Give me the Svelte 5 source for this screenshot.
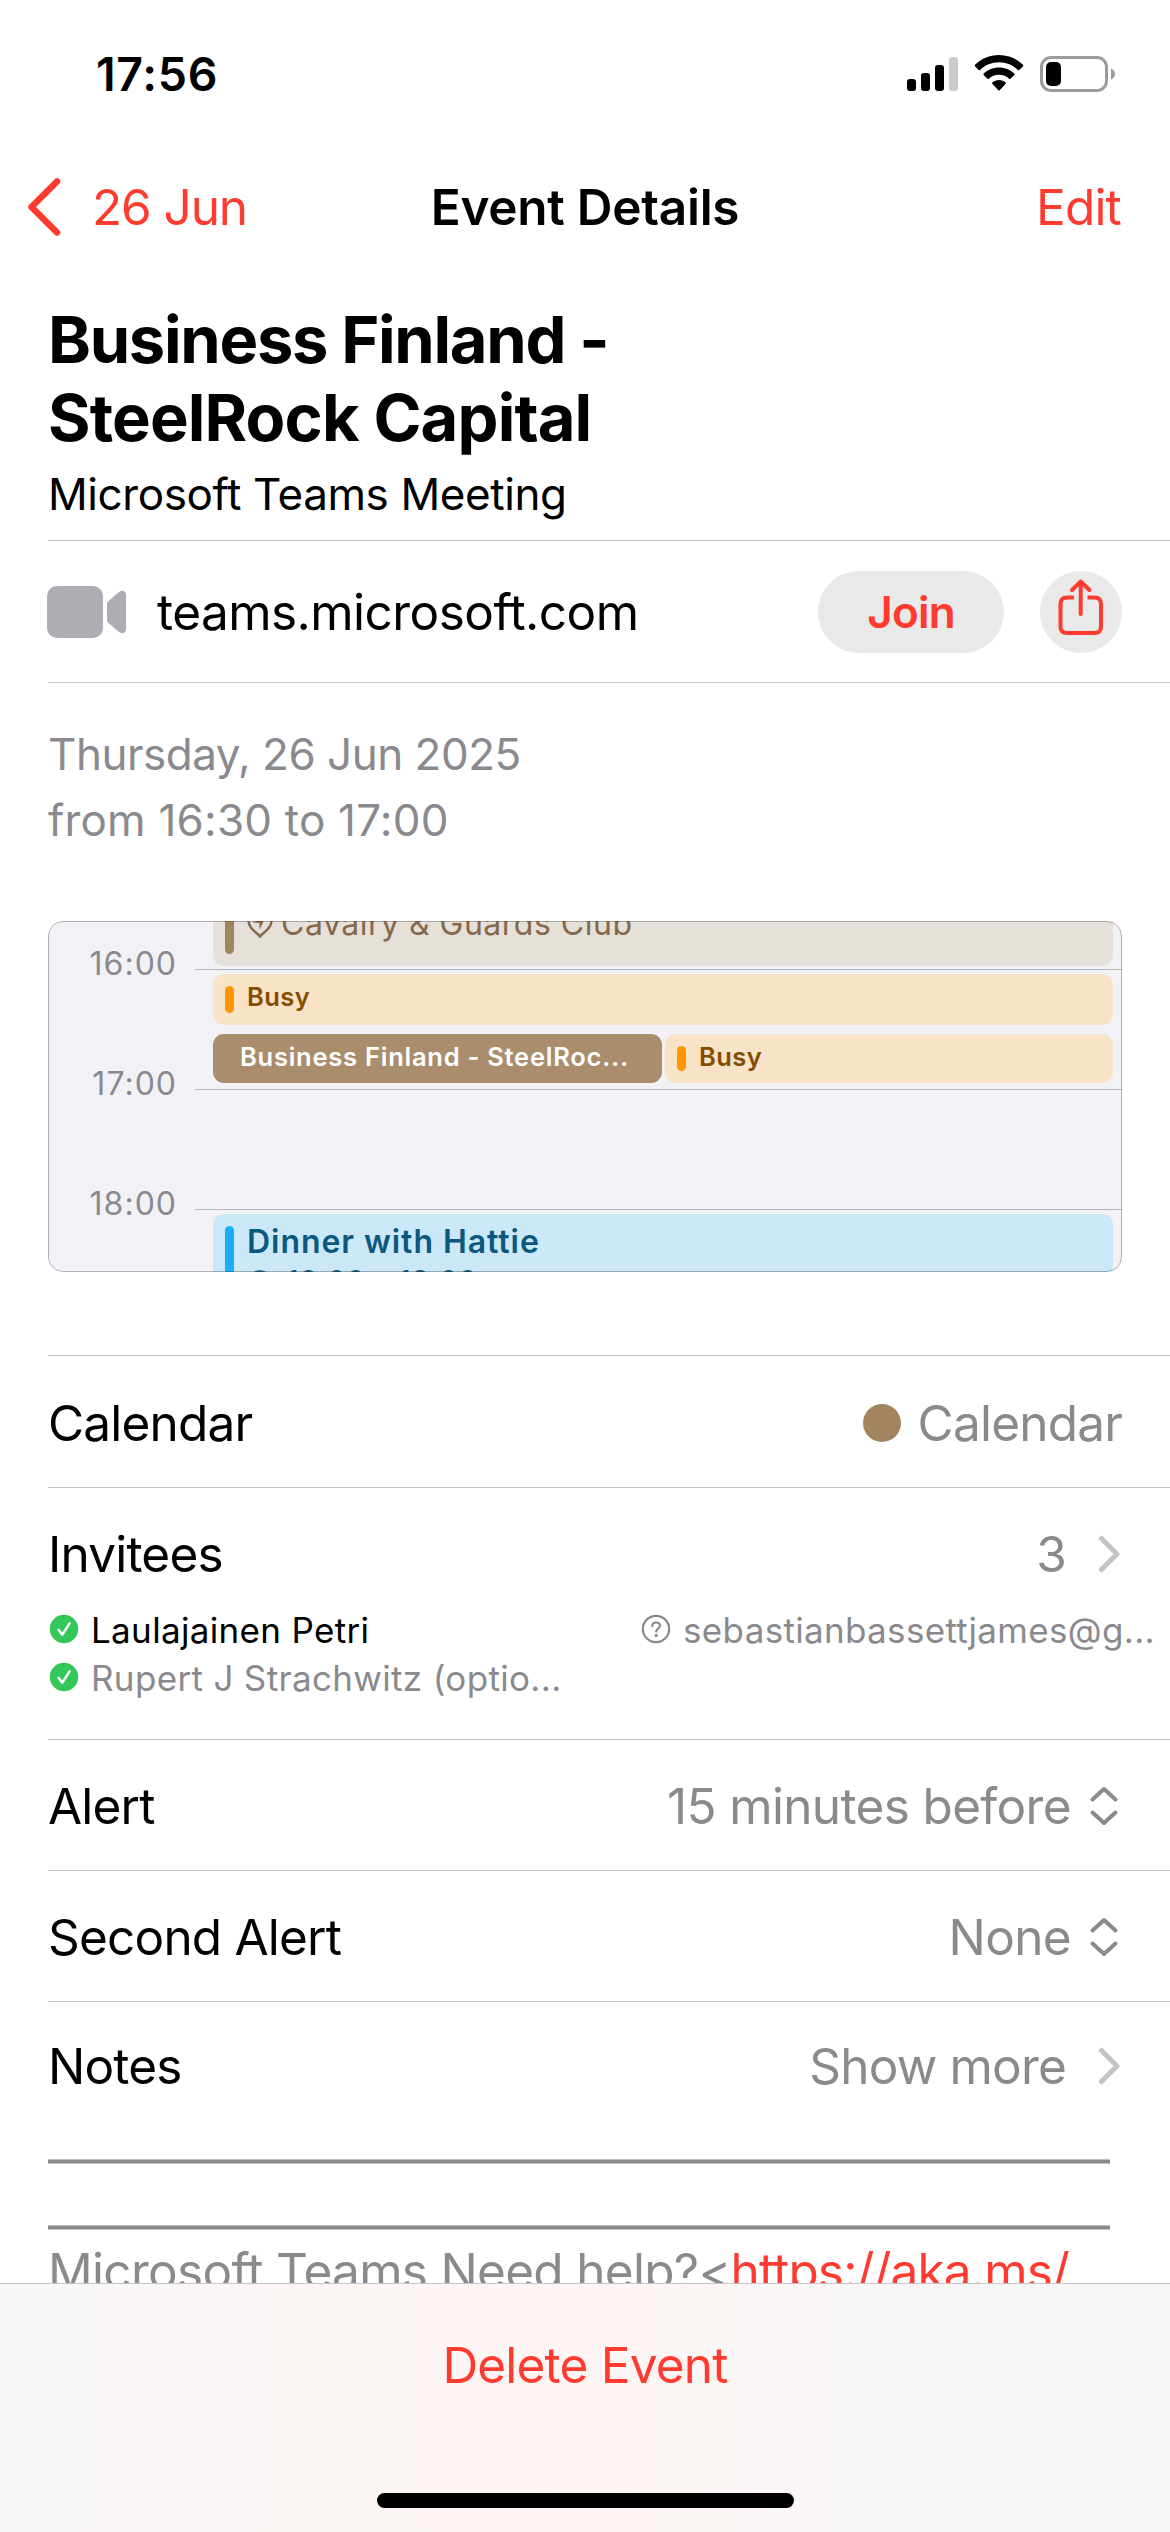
<script>
	const hours = [
		{ label: '16:00', top: 47 },
		{ label: '17:00', top: 167 },
		{ label: '18:00', top: 287 }
	];

	const alerts = [
		{ label: 'Alert', value: '15 minutes before' },
		{ label: 'Second Alert', value: 'None' }
	];
</script>

{#snippet chevron()}
	<svg class="chevron" width="24" height="40" viewBox="0 0 24 40" fill="none">
		<path d="M3.5 4.5 L19 20 L3.5 35.5" stroke="#c4c4c7" stroke-width="5" stroke-linecap="round" stroke-linejoin="round" />
	</svg>
{/snippet}

{#snippet accepted()}
	<svg width="30" height="30" viewBox="0 0 30 30" fill="none">
		<circle cx="15" cy="15" r="14.3" fill="#34c759" />
		<path d="M9.5 15.8 L13.3 20.6 L20.6 9.4" stroke="#fff" stroke-width="2.5" stroke-linecap="round" stroke-linejoin="round" />
	</svg>
{/snippet}

<div class="screen">
	<div class="status">
		<span class="time">17:56</span>
		<div class="indicators">
			<svg width="52" height="36" viewBox="0 0 52 36">
				<rect x="1" y="23" width="9" height="12" rx="3" />
				<rect x="15" y="17" width="9" height="18" rx="3" />
				<rect x="29" y="9" width="9" height="26" rx="3" />
				<rect x="43" y="1" width="9" height="34" rx="3" fill="#cbcbcb" />
			</svg>
			<svg class="wifi" width="50" height="38" viewBox="0 0 50 38">
				<path d="M25 1 C34.5 1 43 4.8 49 10.8 C49.4 11.2 49.4 11.8 49 12.2 L45.3 16 C44.9 16.4 44.3 16.4 43.9 16 C38.9 11.1 32.3 8.3 25 8.3 C17.7 8.3 11.1 11.1 6.1 16 C5.7 16.4 5.1 16.4 4.7 16 L1 12.2 C0.6 11.8 0.6 11.2 1 10.8 C7 4.8 15.5 1 25 1 Z" />
				<path d="M25 13.5 C31 13.5 36.3 15.8 40.3 19.6 C40.7 20 40.7 20.6 40.3 21 L36.5 24.8 C36.1 25.2 35.5 25.2 35.1 24.8 C32.4 22.3 28.9 20.8 25 20.8 C21.1 20.8 17.6 22.3 14.9 24.8 C14.5 25.2 13.9 25.2 13.5 24.8 L9.7 21 C9.3 20.6 9.3 20 9.7 19.6 C13.7 15.8 19 13.5 25 13.5 Z" />
				<path d="M25 26 C27.6 26 29.9 26.9 31.7 28.4 C32.1 28.8 32.1 29.3 31.7 29.7 L25.7 36.2 C25.3 36.6 24.7 36.6 24.3 36.2 L18.3 29.7 C17.9 29.3 17.9 28.8 18.3 28.4 C20.1 26.9 22.4 26 25 26 Z" />
			</svg>
			<svg width="76" height="38" viewBox="0 0 76 38">
				<rect x="1.5" y="2.5" width="65" height="33" rx="9.5" fill="none" stroke="#9b9b9b" stroke-width="3" />
				<rect x="6" y="7" width="15" height="24" rx="5" />
				<path d="M71 13.5 C73.5 14.5 75 16.5 75 19 C75 21.5 73.5 23.5 71 24.5 Z" fill="#9b9b9b" />
			</svg>
		</div>
	</div>

	<nav>
		<button class="back">
			<svg width="36" height="62" viewBox="0 0 36 62" fill="none">
				<path d="M31 5.5 L5.5 31 L31 56.5" stroke="#ff3b30" stroke-width="6.5" stroke-linecap="round" stroke-linejoin="round" />
			</svg>
			<span>26 Jun</span>
		</button>
		<h1>Event Details</h1>
		<button class="edit">Edit</button>
	</nav>

	<header>
		<h2>Business Finland -<br /><span>SteelRock Capital</span></h2>
		<p>Microsoft Teams Meeting</p>
	</header>

	<div class="call">
		<svg width="80" height="54" viewBox="0 0 80 54" fill="#aeadb3">
			<rect x="0" y="1" width="56" height="52" rx="10" />
			<path d="M60 18.5 Q60 17.5 61 16.5 L72 7 Q75 5 77.5 6.5 Q79 7.5 79 10 V44 Q79 46.5 77.5 47.5 Q75 49 72 47 L61 37.5 Q60 36.5 60 35.5 Z" />
		</svg>
		<span class="host">teams.microsoft.com</span>
		<button class="join">Join</button>
		<button class="share" aria-label="Share">
			<svg width="82" height="82" viewBox="0 0 82 82" fill="none" stroke="#ff3b30" stroke-width="4">
				<path d="M34 26.5 H27 Q20.5 26.5 20.5 33 V55.5 Q20.5 62 27 62 H54.5 Q61 62 61 55.5 V33 Q61 26.5 54.5 26.5 H47.5" />
				<path d="M40.7 43 V11 M32 19 L40.7 10.5 L49.4 19" stroke-linecap="round" stroke-linejoin="round" />
			</svg>
		</button>
	</div>

	<p class="when">Thursday, 26 Jun 2025<br /><span class="range">from 16:30 to 17:00</span></p>

	<!-- day preview: events sit on the hour grid, clipped to the visible window -->
	<div class="timeline">
		{#each hours as hour}
			<div class="hour" style="top: {hour.top}px">
				<span>{hour.label}</span>
				<i></i>
			</div>
		{/each}

		<div class="event club">
			<i></i>
			<svg width="26" height="34" viewBox="0 0 26 34" fill="none" stroke="#85694a" stroke-width="2.4">
				<path d="M13 32.5 C10.5 28.5 1.5 25.5 1.5 16.5 A11.5 11.5 0 0 1 24.5 16.5 C24.5 25.5 15.5 28.5 13 32.5 Z" />
				<path d="M5.5 18.5 L19 12.5 L12.5 25.5 V19 Z" fill="#85694a" stroke="none" />
			</svg>
			<span>Cavalry &amp; Guards Club</span>
		</div>
		<div class="event orange first"><i></i><span>Busy</span></div>
		<div class="event current"><span>Business Finland - SteelRoc...</span></div>
		<div class="event orange second"><i></i><span>Busy</span></div>
		<div class="event blue">
			<i></i>
			<div>
				<span>Dinner with Hattie</span>
				<small>
					<svg width="26" height="26" viewBox="0 0 26 26" fill="none" stroke="#0b587e" stroke-width="2.4">
						<circle cx="13" cy="13" r="11.5" />
					</svg>
					18:00 – 19:00
				</small>
			</div>
		</div>
		<div class="frame"></div>
	</div>

	<section class="row calendar">
		<span>Calendar</span>
		<span class="value"><b class="dot"></b>Calendar</span>
	</section>

	<section class="invitees">
		<div class="head">
			<span>Invitees</span>
			<span class="value">3{@render chevron()}</span>
		</div>
		<div class="people">
			<div class="person going">{@render accepted()}<span>Laulajainen Petri</span></div>
			<div class="person">
				<svg width="30" height="30" viewBox="0 0 30 30" fill="none" stroke="#8a8a8e" stroke-width="2.2">
					<circle cx="15" cy="15" r="13.2" />
					<path d="M11.3 12 C11.3 9.8 12.9 8.5 15.1 8.5 C17.3 8.5 18.9 9.8 18.9 11.8 C18.9 14.6 15.2 14.5 15.2 17.6" stroke-linecap="round" />
					<circle cx="15.2" cy="21.4" r="1.6" fill="#8a8a8e" stroke="none" />
				</svg>
				<span>sebastianbassettjames@g...</span>
			</div>
			<div class="person">{@render accepted()}<span>Rupert J Strachwitz (optio...</span></div>
		</div>
	</section>

	{#each alerts as alert}
		<section class="row">
			<span>{alert.label}</span>
			<span class="value picker">
				{alert.value}
				<svg width="30" height="42" viewBox="0 0 30 42" fill="none" stroke="#8a8a8e" stroke-width="4" stroke-linecap="round" stroke-linejoin="round">
					<path d="M3.5 14.5 L15 4 L26.5 14.5 M3.5 27.5 L15 38 L26.5 27.5" />
				</svg>
			</span>
		</section>
	{/each}

	<section class="row notes">
		<span>Notes</span>
		<span class="value">Show more{@render chevron()}</span>
	</section>
	<div class="rules">
		<hr />
		<hr />
	</div>
	<p class="body">Microsoft Teams Need help?&lt;<span>https://aka.ms/</span></p>

	<footer>
		<button class="delete">Delete Event</button>
		<div class="home"></div>
	</footer>
</div>

<style>
	:global(body) {
		margin: 0;
		background: #fff;
	}

	.screen {
		width: 1170px;
		height: 2532px;
		display: flex;
		flex-direction: column;
		overflow: hidden;
		background: #fff;
		color: #000;
		font-family: Inter, 'Liberation Sans', sans-serif;
		font-size: 49.5px;
		letter-spacing: -0.8px;
		line-height: 60px;
		white-space: nowrap;
	}

	.screen > * {
		flex-shrink: 0;
		box-sizing: border-box;
	}

	h1, h2, p {
		margin: 0;
	}

	svg {
		display: block;
		flex-shrink: 0;
	}

	button {
		padding: 0;
		border: 0;
		background: none;
		color: #ff3b30;
		font: inherit;
		letter-spacing: inherit;
	}

	.status {
		height: 148px;
		padding: 0 54px 0 96px;
		display: flex;
		align-items: center;
		justify-content: space-between;
	}

	.time {
		font-size: 46.5px;
		font-weight: 600;
		letter-spacing: 0.7px;
	}

	.indicators {
		display: flex;
		align-items: center;
		gap: 16px;
	}

	.wifi {
		margin-bottom: 2px;
	}

	nav {
		height: 118px;
		padding: 0 26px;
		display: grid;
		grid-template-columns: 1fr auto 1fr;
		align-items: center;
	}

	nav h1 {
		font-size: 49.5px;
		font-weight: 600;
		letter-spacing: -0.25px;
	}

	.back {
		display: flex;
		align-items: center;
		gap: 30px;
		letter-spacing: -1.1px;
	}

	.edit {
		justify-self: end;
		margin-right: 23px;
	}

	header {
		height: 275px;
		margin-left: 48px;
		padding-top: 35px;
		border-bottom: 1px solid #c6c6c8;
	}

	h2 {
		font-size: 65px;
		font-weight: 700;
		letter-spacing: -1.3px;
		line-height: 78px;
	}

	h2 span {
		letter-spacing: -0.85px;
	}

	header p {
		margin-top: 10px;
		font-size: 44px;
		letter-spacing: -0.4px;
		line-height: 54px;
	}

	.call {
		height: 142px;
		margin-left: 48px;
		padding-right: 48px;
		display: flex;
		align-items: center;
		border-bottom: 1px solid #c6c6c8;
	}

	.call > svg {
		margin-left: -1px;
	}

	.host {
		flex: 1;
		margin-left: 30px;
		letter-spacing: -0.55px;
	}

	.join {
		width: 186px;
		height: 82px;
		margin-right: 36px;
		border-radius: 41px;
		background: #e9e9e9;
		font-size: 44px;
		font-weight: 600;
	}

	.share {
		width: 82px;
		height: 82px;
		border-radius: 50%;
		background: #e9e9e9;
	}

	.when {
		height: 238px;
		padding: 38px 48px 0;
		color: #8a8a8e;
		font-size: 44px;
		letter-spacing: -0.5px;
		line-height: 66px;
	}

	.range {
		letter-spacing: 0.2px;
	}

	.timeline {
		position: relative;
		width: 1074px;
		height: 351px;
		margin-left: 48px;
		border-radius: 15px;
		overflow: hidden;
		background: #f2f1f6;
		font-size: 32px;
		letter-spacing: 0.5px;
	}

	.hour {
		position: absolute;
		left: 0;
		right: 0;
		height: 2px;
		display: flex;
		align-items: center;
	}

	.hour span {
		width: 129px;
		margin-right: 18px;
		text-align: right;
		color: #8a8a8e;
		letter-spacing: 1px;
		transform: translateY(-5px);
	}

	.hour i {
		flex: 1;
		height: 1px;
		background: #b9b9bd;
	}

	.event {
		position: absolute;
		left: 165px;
		width: 900px;
		box-sizing: border-box;
		padding: 12px;
		display: flex;
		border-radius: 11px;
		font-weight: 600;
	}

	.event i {
		width: 9px;
		border-radius: 4.5px;
	}

	.club {
		top: -60px;
		height: 105px;
		background: #e5e0da;
		color: #85694a;
		font-weight: 400;
		align-items: flex-end;
	}

	.club i {
		align-self: stretch;
		background: #a2845e;
	}

	.club svg {
		margin: 0 8px 16px 13px;
	}

	.club span {
		line-height: 40px;
		margin-bottom: 10px;
	}

	.orange {
		background: #f9e3c7;
		color: #854d00;
		font-size: 25.5px;
		letter-spacing: 0.4px;
		line-height: 22px;
	}

	.orange i {
		margin-right: 13px;
		background: #ff9500;
	}

	.first {
		top: 53px;
		height: 51px;
	}

	.second {
		top: 113px;
		left: 617px;
		width: 448px;
		height: 49px;
	}

	.current {
		top: 113px;
		width: 449px;
		height: 49px;
		padding-left: 27px;
		background: #aa8d6c;
		color: #fff;
		font-size: 25.5px;
		letter-spacing: 0.75px;
		line-height: 22px;
	}

	.blue {
		top: 293px;
		height: 120px;
		background: #cbe8f8;
		color: #0b587e;
		letter-spacing: 0.95px;
	}

	.blue i {
		margin-right: 13px;
		background: #1badf8;
	}

	.blue span {
		display: block;
		line-height: 32px;
	}

	.blue small {
		display: flex;
		align-items: center;
		gap: 14px;
		font-size: 29px;
		font-weight: 400;
		letter-spacing: 0.8px;
		line-height: 36px;
		margin-top: 5px;
	}

	.blue small svg {
		margin-top: 4px;
	}

	.frame {
		position: absolute;
		inset: 0;
		border: 1px solid rgba(60, 60, 67, 0.36);
		border-radius: 15px;
	}

	.row,
	.invitees {
		margin-left: 48px;
		border-top: 1px solid #c6c6c8;
	}

	.row,
	.head {
		display: flex;
		align-items: center;
		justify-content: space-between;
		padding-right: 48px;
	}

	.row {
		height: 131px;
		padding-top: 2px;
	}

	.calendar {
		height: 132px;
		margin-top: 83px;
	}

	.value {
		display: flex;
		align-items: center;
		color: #8a8a8e;
	}

	.dot {
		width: 38px;
		height: 38px;
		margin-right: 17px;
		border-radius: 50%;
		background: #a2845e;
	}

	.chevron {
		margin-left: 32px;
	}

	.invitees {
		height: 252px;
	}

	.head {
		height: 118px;
		padding-top: 14px;
		box-sizing: border-box;
	}

	.people {
		display: grid;
		grid-template-columns: 592px 1fr;
		grid-auto-rows: 48px;
		font-size: 35px;
		letter-spacing: 0.33px;
	}

	.person {
		display: flex;
		align-items: center;
		gap: 12px;
		color: #8a8a8e;
	}

	.person svg {
		margin: 0 0 3px 1px;
	}

	.going {
		color: #000;
	}

	.picker {
		gap: 18px;
		padding-right: 3px;
		letter-spacing: -0.65px;
	}

	.notes {
		height: 128px;
		padding-top: 0;
	}

	.rules {
		width: 1062px;
		margin: 30px 0 0 48px;
		display: grid;
		gap: 61px;
	}

	.rules hr {
		width: 100%;
		height: 5px;
		margin: 0;
		border: solid #c0c0c2;
		border-width: 1px 0;
		box-sizing: border-box;
		background: #8a8a8e;
	}

	.body {
		height: 53px;
		padding: 11px 0 0 48px;
		overflow: hidden;
		color: #8a8a8e;
		letter-spacing: -0.7px;
	}

	.body span {
		color: #ff3b30;
		letter-spacing: -0.85px;
	}

	footer {
		height: 250px;
		display: flex;
		flex-direction: column;
		align-items: center;
		border-top: 1px solid #c6c6c8;
		background: linear-gradient(90deg, #f7f7f7 0%, #fbf7f6 12%, #fdf5f4 50%, #faf6f5 68%, #f6f6f7 80%, #f6f6f7 100%);
	}

	.delete {
		margin-top: 51px;
	}

	.home {
		width: 417px;
		height: 15px;
		margin-top: 98px;
		border-radius: 7.5px;
		background: #000;
	}
</style>
